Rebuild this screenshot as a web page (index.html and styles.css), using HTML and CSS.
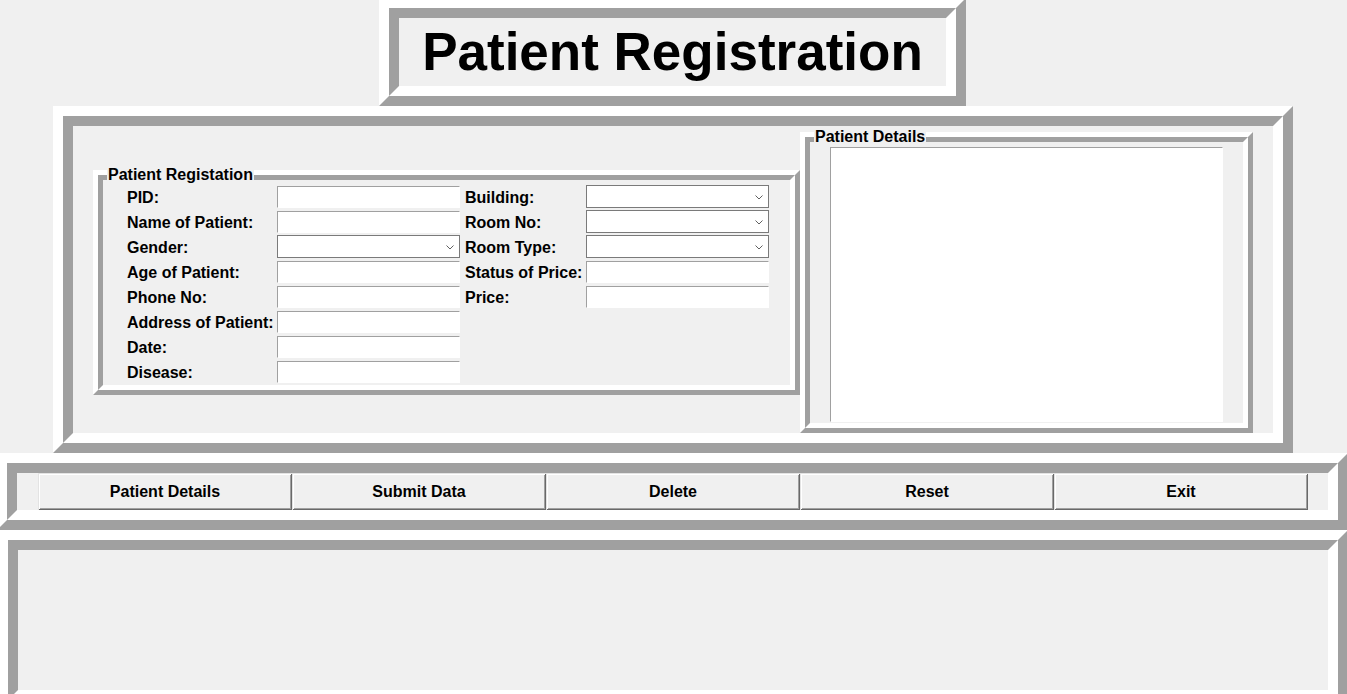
FILE: index.html
```html
<!DOCTYPE html>
<html lang="en">
<head>
<meta charset="utf-8">
<title>Patient Registration</title>
<link rel="stylesheet" href="styles.css">
</head>
<body>
<div class="app">
  <div class="ridge ridge-10 title-frame">
    <div class="ridge-in">
      <h1 class="title">Patient Registration</h1>
    </div>
  </div>

  <div class="ridge ridge-10 main-frame">
    <div class="ridge-in main-inner">
      <div class="ridge ridge-5 lf reg-frame">
        <span class="lf-label">Patient Registation</span>
        <div class="ridge-in form-grid">
          <span class="lbl lbl-l">PID:</span>
          <input class="entry" type="text">
          <span class="lbl lbl-r">Building:</span>
          <div class="combo"><svg class="chev" width="8" height="5" viewBox="0 0 8 5"><path d="M0.5 0.5 L4 4 L7.5 0.5" fill="none" stroke="#606060" stroke-width="1"/></svg></div>

          <span class="lbl lbl-l">Name of Patient:</span>
          <input class="entry" type="text">
          <span class="lbl lbl-r">Room No:</span>
          <div class="combo"><svg class="chev" width="8" height="5" viewBox="0 0 8 5"><path d="M0.5 0.5 L4 4 L7.5 0.5" fill="none" stroke="#606060" stroke-width="1"/></svg></div>

          <span class="lbl lbl-l">Gender:</span>
          <div class="combo"><svg class="chev" width="8" height="5" viewBox="0 0 8 5"><path d="M0.5 0.5 L4 4 L7.5 0.5" fill="none" stroke="#606060" stroke-width="1"/></svg></div>
          <span class="lbl lbl-r">Room Type:</span>
          <div class="combo"><svg class="chev" width="8" height="5" viewBox="0 0 8 5"><path d="M0.5 0.5 L4 4 L7.5 0.5" fill="none" stroke="#606060" stroke-width="1"/></svg></div>

          <span class="lbl lbl-l">Age of Patient:</span>
          <input class="entry" type="text">
          <span class="lbl lbl-r">Status of Price:</span>
          <input class="entry" type="text">

          <span class="lbl lbl-l">Phone No:</span>
          <input class="entry" type="text">
          <span class="lbl lbl-r">Price:</span>
          <input class="entry" type="text">

          <span class="lbl lbl-l">Address of Patient:</span>
          <input class="entry" type="text">

          <span class="lbl lbl-l">Date:</span>
          <input class="entry" type="text">

          <span class="lbl lbl-l">Disease:</span>
          <input class="entry" type="text">
        </div>
      </div>

      <div class="ridge ridge-5 lf details-frame">
        <span class="lf-label">Patient Details</span>
        <div class="ridge-in details-inner">
          <div class="textbox"></div>
        </div>
      </div>
    </div>
  </div>

  <div class="ridge ridge-10 bar-frame">
    <div class="ridge-in bar-inner">
      <button class="btn" type="button">Patient Details</button>
      <button class="btn" type="button">Submit Data</button>
      <button class="btn" type="button">Delete</button>
      <button class="btn" type="button">Reset</button>
      <button class="btn" type="button">Exit</button>
    </div>
  </div>

  <div class="ridge ridge-10 bottom-frame">
    <div class="ridge-in"></div>
  </div>
</div>
</body>
</html>
```

FILE: styles.css
```css
html, body {
  margin: 0;
  padding: 0;
  overflow: hidden;
  background: #f0f0f0;
}

body {
  width: 1347px;
  height: 694px;
  font-family: "Liberation Sans", Arial, sans-serif;
  color: #000;
}

.app {
  width: 1347px;
}

/* Tk-style ridge: outer half light top/left, dark bottom/right; inner half reversed */
.ridge {
  box-sizing: border-box;
  border-style: solid;
  border-color: #ffffff #a0a0a0 #a0a0a0 #ffffff;
}

.ridge-10 { border-width: 10px; }
.ridge-5 { border-width: 5px; }

.ridge-in {
  box-sizing: border-box;
  height: 100%;
  border-style: solid;
  border-color: #a0a0a0 #ffffff #ffffff #a0a0a0;
}

.ridge-10 > .ridge-in { border-width: 10px; }
.ridge-5 > .ridge-in { border-width: 5px; }

/* Title */
.title-frame {
  width: 587px;
  height: 108px;
  margin: -2px 0 0 379px;
}

.title {
  margin: 0;
  font-size: 53px;
  font-weight: bold;
  line-height: 68px;
  text-align: center;
}

/* Main frame */
.main-frame {
  width: 1240px;
  height: 347px;
  margin-left: 53px;
}

.main-inner {
  display: flex;
  align-items: center;
  padding: 6px 20px 0 20px;
}

.lf {
  position: relative;
}

.lf-label {
  position: absolute;
  z-index: 1;
  top: -9px;
  left: 9px;
  padding: 0 1px;
  background: #f0f0f0;
  font-size: 16px;
  font-weight: bold;
  line-height: 18px;
  white-space: nowrap;
}

.reg-frame {
  width: 707px;
  height: 225px;
}

.form-grid {
  display: grid;
  grid-template-columns: 150px 183px 126px 183px;
  grid-auto-rows: 25px;
  align-content: start;
  padding: 5px 0 0 24px;
}

.lbl {
  font-size: 16px;
  font-weight: bold;
  line-height: 25px;
  white-space: nowrap;
}

.lbl-l { grid-column: 1; }
.lbl-r { padding-left: 5px; }

.entry {
  display: block;
  box-sizing: border-box;
  width: 183px;
  height: 22px;
  margin: 1px 0 0 0;
  padding: 0 2px;
  border-style: solid;
  border-width: 1px;
  border-color: #a0a0a0 #ffffff #ffffff #a0a0a0;
  background: #ffffff;
  font: 14px "Liberation Sans", Arial, sans-serif;
  outline: none;
}

.combo {
  position: relative;
  box-sizing: border-box;
  width: 183px;
  height: 23px;
  border: 1px solid #7a7a7a;
  background: #ffffff;
}

.chev {
  position: absolute;
  right: 5px;
  top: 9px;
  display: block;
}

/* Details */
.details-frame {
  width: 453px;
  height: 301px;
}

.details-inner {
  padding: 5px 20px 1px 20px;
}

.textbox {
  box-sizing: border-box;
  height: 100%;
  background: #ffffff;
  border-style: solid;
  border-width: 1px;
  border-color: #a0a0a0 #ffffff #ffffff #a0a0a0;
}

/* Button bar */
.bar-frame {
  width: 1351px;
  height: 77px;
  margin-left: -3px;
}

.bar-inner {
  display: flex;
  padding: 0 20px 0 21px;
}

.btn {
  box-sizing: border-box;
  width: 254px;
  height: 37px;
  margin: 0;
  padding: 0;
  border: 0;
  background: #f0f0f0;
  color: #000;
  font-family: "Liberation Sans", Arial, sans-serif;
  font-size: 16px;
  font-weight: bold;
  line-height: 33px;
  box-shadow:
    inset 1px 1px 0 #e3e3e3,
    inset -1px -1px 0 #696969,
    inset 2px 2px 0 #ffffff,
    inset -2px -2px 0 #a0a0a0;
}

/* Bottom empty frame */
.bottom-frame {
  width: 1350px;
  height: 180px;
  margin-left: -2px;
}
```
